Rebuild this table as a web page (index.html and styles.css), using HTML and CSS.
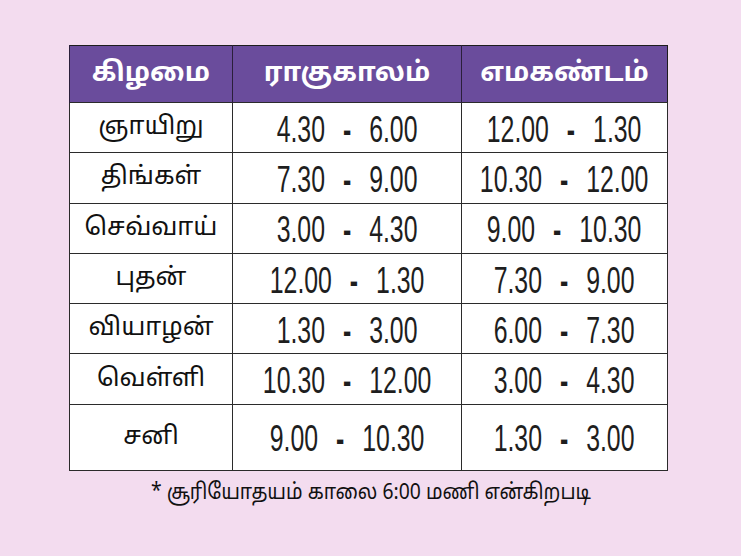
FILE: index.html
```html
<!DOCTYPE html>
<html lang="ta">
<head>
<meta charset="utf-8">
<title>ராகுகாலம் எமகண்டம்</title>
<link rel="stylesheet" href="styles.css">
</head>
<body>
<div class="page">
  <table class="times">
    <thead>
      <tr><th class="c1">கிழமை</th><th class="c2">ராகுகாலம்</th><th class="c3">எமகண்டம்</th></tr>
    </thead>
    <tbody>
      <tr><td class="day">ஞாயிறு</td><td><span class="num">4.30<span class="dash">-</span>6.00</span></td><td><span class="num">12.00<span class="dash">-</span>1.30</span></td></tr>
      <tr><td class="day">திங்கள்</td><td><span class="num">7.30<span class="dash">-</span>9.00</span></td><td><span class="num">10.30<span class="dash">-</span>12.00</span></td></tr>
      <tr><td class="day">செவ்வாய்</td><td><span class="num">3.00<span class="dash">-</span>4.30</span></td><td><span class="num">9.00<span class="dash">-</span>10.30</span></td></tr>
      <tr><td class="day">புதன்</td><td><span class="num">12.00<span class="dash">-</span>1.30</span></td><td><span class="num">7.30<span class="dash">-</span>9.00</span></td></tr>
      <tr><td class="day">வியாழன்</td><td><span class="num">1.30<span class="dash">-</span>3.00</span></td><td><span class="num">6.00<span class="dash">-</span>7.30</span></td></tr>
      <tr><td class="day">வெள்ளி</td><td><span class="num">10.30<span class="dash">-</span>12.00</span></td><td><span class="num">3.00<span class="dash">-</span>4.30</span></td></tr>
      <tr class="last"><td class="day">சனி</td><td><span class="num">9.00<span class="dash">-</span>10.30</span></td><td><span class="num">1.30<span class="dash">-</span>3.00</span></td></tr>
    </tbody>
  </table>
  <p class="note"><span class="note-text">* சூரியோதயம் காலை 6:00 மணி என்கிறபடி</span></p>
</div>
</body>
</html>
```
FILE: styles.css
```css
html, body {
  margin: 0;
  padding: 0;
  background: #f3dcef;
}
.page {
  width: 741px;
  height: 556px;
  padding-top: 45px;
  box-sizing: border-box;
  font-family: "Noto Sans Tamil", "Lohit Tamil", "Noto Sans", "Liberation Sans", sans-serif;
  color: #111;
}
.times {
  margin-left: 69px;
  width: 599px;
  border-collapse: collapse;
  table-layout: fixed;
  background: #fff;
  border: 1.5px solid #1d1d1d;
}
.times th {
  background: #6a4c9c;
  color: #fff;
  height: 56px;
  padding: 0;
  font-size: 27px;
  font-weight: 700;
  border-left: 1.5px solid #2a1f3a;
  text-align: center;
  vertical-align: middle;
}
.times th.c1 { width: 162px; }
.times th.c2 { width: 228px; }
.times td {
  height: 49.3px;
  padding: 0;
  text-align: center;
  vertical-align: middle;
  border: 1.5px solid #2b2b2b;
}
.times tr.last td { height: 65px; }
.day {
  font-size: 25px;
}
.num {
  display: inline-block;
  font-family: "Liberation Sans", sans-serif;
  font-size: 36px;
  line-height: 40px;
  transform: scaleX(0.69);
  white-space: nowrap;
  color: #1e1e1e;
  margin: 4px -30px 0;
}
.dash {
  display: inline-block;
  margin: 0 26px;
  font-weight: 700;
}
.note {
  margin: 9px 0 0 0;
  text-align: center;
}
.note-text {
  display: inline-block;
  font-size: 22px;
  transform: scaleX(0.88);
  white-space: nowrap;
}
```
